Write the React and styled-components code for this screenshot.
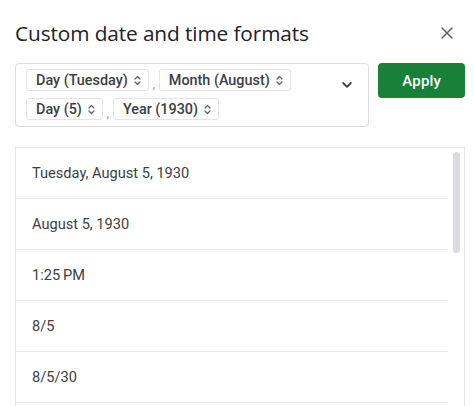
import React from "react";
import styled, { createGlobalStyle } from "styled-components";

const Global = createGlobalStyle`
  html, body { margin: 0; padding: 0; background: #fff; }
  body { font-family: Roboto, "Noto Sans", Arial, sans-serif; overflow: hidden; }
`;

const Dialog = styled.div`
  width: 474px;
  height: 406px;
  box-sizing: border-box;
  padding: 17px 9px 0 15px;
  display: flex;
  flex-direction: column;
  overflow: hidden;
`;

const Header = styled.div`
  display: flex;
  align-items: center;
  justify-content: space-between;
  height: 32px;
  padding-right: 10px;
`;

const Title = styled.h1`
  margin: 0;
  font-family: "Open Sans", Roboto, sans-serif;
  font-weight: 400;
  font-size: 20.8px;
  letter-spacing: -0.1px;
  color: #202124;
`;

const CloseBtn = styled.button`
  border: 0;
  background: none;
  padding: 0;
  width: 16px;
  height: 16px;
  display: flex;
  align-items: center;
  justify-content: center;
  cursor: pointer;
`;

const Controls = styled.div`
  display: flex;
  gap: 9px;
  margin-top: 14px;
`;

const FormatBox = styled.div`
  width: 356px;
  height: 64px;
  box-sizing: border-box;
  border: 1px solid #dadce0;
  border-radius: 4px;
  padding: 5px 10px 0 10px;
  display: flex;
  align-items: flex-start;
`;

const ChipRows = styled.div`
  flex: 1;
  display: flex;
  flex-direction: column;
  gap: 7px;
`;

const ChipRow = styled.div`
  display: flex;
  align-items: center;
`;

const Chip = styled.div`
  height: 22px;
  box-sizing: border-box;
  border: 1px solid #e3e4e6;
  border-radius: 3px;
  padding: 0 7px 0 9px;
  display: flex;
  align-items: center;
  gap: 6px;
  font-size: 14.4px;
  font-weight: 500;
  color: #3c4043;
`;

const Comma = styled.span`
  font-size: 13px;
  color: #9aa0a6;
  width: 10px;
  text-align: center;
  margin-top: 6px;
`;

const DropDown = styled.div`
  width: 14px;
  height: 14px;
  margin-top: 9px;
  margin-right: 4px;
  display: flex;
  align-items: center;
  justify-content: center;
`;

const ApplyButton = styled.button`
  width: 87px;
  height: 35px;
  border: 0;
  border-radius: 4px;
  background: #188038;
  color: #fff;
  font-family: Roboto, sans-serif;
  font-weight: 500;
  font-size: 15px;
  letter-spacing: 0.2px;
  cursor: pointer;
`;

const List = styled.div`
  margin-top: 20px;
  width: 450px;
  flex: 1;
  box-sizing: border-box;
  border: 1px solid #e3e4e6;
  border-bottom: 0;
  display: flex;
  overflow: hidden;
`;

const Rows = styled.div`
  flex: 1;
  display: flex;
  flex-direction: column;
`;

const Row = styled.div`
  height: 51px;
  flex-shrink: 0;
  box-sizing: border-box;
  border-bottom: 1px solid #e8eaed;
  padding-left: 16px;
  display: flex;
  align-items: center;
  font-size: 14.6px;
  color: #3c4043;
`;

const Track = styled.div`
  width: 16px;
  flex-shrink: 0;
  display: flex;
  justify-content: center;
  padding-top: 4px;
`;

const Thumb = styled.div`
  width: 7px;
  height: 101px;
  border-radius: 4px;
  background: #dadce0;
`;

const UpDown = () => (
  <svg width="7" height="11" viewBox="0 0 7 11" fill="none" stroke="#5f6368" strokeWidth="1.2" strokeLinecap="round" strokeLinejoin="round">
    <path d="M1 4 L3.5 1.5 L6 4" />
    <path d="M1 7 L3.5 9.5 L6 7" />
  </svg>
);

const chipsRow1 = ["Day (Tuesday)", "Month (August)"];
const chipsRow2 = ["Day (5)", "Year (1930)"];
const items = ["Tuesday, August 5, 1930", "August 5, 1930", "1:25\u2009PM", "8/5", "8/5/30"];

const renderChips = (chips) =>
  chips.map((c, i) => (
    <React.Fragment key={c}>
      {i > 0 && <Comma>,</Comma>}
      <Chip>
        {c}
        <UpDown />
      </Chip>
    </React.Fragment>
  ));

export default function App() {
  return (
    <>
      <Global />
      <Dialog>
        <Header>
          <Title>Custom date and time formats</Title>
          <CloseBtn aria-label="Close">
            <svg width="12" height="12" viewBox="0 0 12 12" stroke="#5f6368" strokeWidth="1.5" strokeLinecap="round">
              <path d="M1 1 L11 11 M11 1 L1 11" />
            </svg>
          </CloseBtn>
        </Header>
        <Controls>
          <FormatBox>
            <ChipRows>
              <ChipRow>{renderChips(chipsRow1)}</ChipRow>
              <ChipRow>{renderChips(chipsRow2)}</ChipRow>
            </ChipRows>
            <DropDown>
              <svg width="10" height="6" viewBox="0 0 10 6" fill="none" stroke="#3c4043" strokeWidth="1.8" strokeLinecap="round" strokeLinejoin="round">
                <path d="M1.2 1 L5 4.8 L8.8 1" />
              </svg>
            </DropDown>
          </FormatBox>
          <ApplyButton>Apply</ApplyButton>
        </Controls>
        <List>
          <Rows>
            {items.map((t) => (
              <Row key={t}>{t}</Row>
            ))}
          </Rows>
          <Track>
            <Thumb />
          </Track>
        </List>
      </Dialog>
    </>
  );
}
